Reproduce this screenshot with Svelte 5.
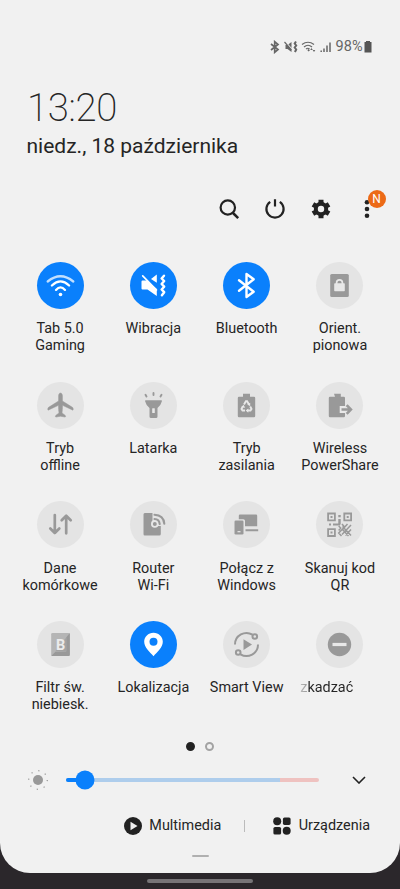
<script lang="ts">
   let tiles = $state([
      { icon: "wifi", label: ["Tab 5.0", "Gaming"], active: true },
      { icon: "vibrate", label: ["Wibracja"], active: true },
      { icon: "bluetooth", label: ["Bluetooth"], active: true },
      { icon: "rotation", label: ["Orient.", "pionowa"], active: false },
      { icon: "plane", label: ["Tryb", "offline"], active: false },
      { icon: "torch", label: ["Latarka"], active: false },
      { icon: "battery", label: ["Tryb", "zasilania"], active: false },
      { icon: "share", label: ["Wireless", "PowerShare"], active: false },
      { icon: "data", label: ["Dane", "komórkowe"], active: false },
      { icon: "router", label: ["Router", "Wi-Fi"], active: false },
      { icon: "windows", label: ["Połącz z", "Windows"], active: false },
      { icon: "qr", label: ["Skanuj kod", "QR"], active: false },
      { icon: "filter", label: ["Filtr św.", "niebiesk."], active: false },
      { icon: "location", label: ["Lokalizacja"], active: true },
      { icon: "cast", label: ["Smart View"], active: false },
      { icon: "dnd", label: ["zkadzać"], active: false },
   ]);

   let brightness = $state(7.5);
</script>

<div class="screen">
   <div class="panel">
      <div class="status">
         <svg width="61" height="14" viewBox="0 0 61 14" fill="none" stroke="#666">
            <path d="M1 4l7 5.500L4.700 12.300V1.700L8 4.500 1 10" stroke-width="1.700" />
            <path d="M15.500 5h2l4-3v10l-4-3h-2z" fill="#666" stroke="none" />
            <path d="M15 1.500l8 9" stroke="#f1f1f1" stroke-width="1.200" />
            <path d="M14.500 2l7 8" stroke-width="1.200" />
            <path d="M26 1.500l-1.300 2 1.500 2-1.500 2 1.500 2-1.300 2.500" stroke-width="2" />
            <path d="M32 4.500q6-4.500 12 0M34 7q4-3.500 8 0M36 9q2-1.500 3.500 0" stroke-width="1.200" />
            <path d="M38 9.500l1.200 1.500" stroke-width="1.800" />
            <path d="M41.500 8l1.300 2h-2.600zM44 12l-1.300-2h2.600z" fill="#666" stroke="none" />
            <path d="M51.200 12v-1.500M54 12V8.500M57 12V5.500M60 12V2.500" stroke-width="1.500" />
         </svg>
         <span>98%</span>
         <svg width="8" height="13" viewBox="0 0 8 13"><path d="M2 1h4v1h1.500v10.500H.5V2H2z" fill="#555" /></svg>
      </div>

      <div class="time">13:20</div>
      <div class="date">niedz., 18 października</div>

      <div class="toolbar">
         <svg viewBox="-12 -12 24 24" fill="none" stroke="#222" stroke-width="2.200">
            <circle cx="-1.200" cy="-1.500" r="7.200" />
            <path d="M4 4l5.200 5.200" stroke-width="2.500" />
         </svg>
         <svg viewBox="-12 -12 24 24" fill="none" stroke="#222" stroke-width="2.200">
            <path d="M-4.800-7.200A8.600 8.600 0 1 0 4.800-7.200M0-9.800V-2.500" />
         </svg>
         <svg viewBox="-12 -12 24 24" fill="none" stroke="#222">
            <circle r="5.200" stroke-width="4" />
            <path d="M-2.500-7.500h5M-2.500 7.500h5" stroke-width="3.600" />
            <path d="M-2.500-7.500h5M-2.500 7.500h5" stroke-width="3.600" transform="rotate(60)" />
            <path d="M-2.500-7.500h5M-2.500 7.500h5" stroke-width="3.600" transform="rotate(120)" />
         </svg>
         <div class="more">
            <svg viewBox="-12 -12 24 24" fill="#222">
               <circle cy="-6.700" r="2.300" />
               <circle r="2.300" />
               <circle cy="6.700" r="2.300" />
            </svg>
            <span class="badge">N</span>
         </div>
      </div>

      <div class="tiles">
         {#each tiles as tile}
            <div class={"tile " + (tile.active ? "active" : "")}>
               <button class="circle" aria-label={tile.label.join(" ")} onclick={() => tile.active = !tile.active}>
                  <svg viewBox="-23.500 -23.500 47 47">
                     {#if tile.icon === "wifi"}
                        <g class="line" stroke-width="2.300">
                           <path d="M-12.800-4Q0-14.500 12.800-4" opacity=".75" />
                           <path d="M-8.600 0Q0-8.200 8.600 0" />
                           <path d="M-4.500 4.400Q0-.6 4.500 4.400" />
                        </g>
                        <circle cy="9" r="1.800" />
                     {:else if tile.icon === "vibrate"}
                        <path d="M-11-5h4.500L3.300 3.500v7L-6 4h-5q-1 0-1-1v-7q0-1 1-1z" />
                        <path d="M-2.500-6.500L3.300-11v8.200z" />
                        <path class="line" d="M-10.800-9.700L3 4.500" stroke-width="1.700" />
                        <path class="line" d="M10.500-9.800L8.100-7l2.600 2.500-2.600 3 2.600 2.700L8.100 4l2.600 2.700-2.300 3" stroke-width="2.400" />
                     {:else if tile.icon === "bluetooth"}
                        <path class="line" d="M-7.500-5.300L7.200 6.200 0 11.500V-11.500L7.200-6.200-7.500 5.300" stroke-width="2.400" />
                     {:else if tile.icon === "rotation"}
                        <rect x="-9.300" y="-11.500" width="18.600" height="23" rx="1.500" />
                        <rect class="cut" x="-5.300" y="-2.200" width="10.600" height="8" rx=".8" />
                        <path class="cut-line" d="M-2.900-1.500v-1.300a2.900 2.900 0 0 1 5.800 0v1.300" stroke-width="1.700" />
                     {:else if tile.icon === "plane"}
                        <path d="M0-12.500c1.100 0 1.900 1.200 1.900 2.800v5.200l10 6.300c.8.500 1.100 2.300.5 2.900L2-.2c0 3-.2 5.700-.5 7.700l3 2.200c.7.600.7 1.900.1 1.900L0 10.700l-4.600.9c-.6 0-.6-1.300.1-1.900l3-2.200c-.3-2-.5-4.700-.5-7.700l-10.400 4.900c-.6-.6-.3-2.400.5-2.900l10-6.300v-5.200c0-1.600.8-2.800 1.900-2.800z" stroke="#999" stroke-width=".5" />
                     {:else if tile.icon === "torch"}
                        <path d="M-7.700-5.200h15.400q1 0 .7 1-1 4.200-4.400 6.700V11q0 1.500-1.500 1.500h-5Q-4 12.500-4 11V2.500q-3.400-2.500-4.400-6.700-.3-1 .7-1z" />
                        <rect class="cut" x="-1.300" y="2.700" width="2.600" height="4.700" rx=".5" />
                        <path class="line" d="M0-12.500v2M-8-10.700l1 1.700M8-10.700L7-9" stroke-width="1.900" />
                     {:else if tile.icon === "battery"}
                        <path d="M-3.500-11.700h7v3h4q1.200 0 1.200 1.200v18q0 1.200-1.200 1.200h-15q-1.200 0-1.200-1.200v-18q0-1.200 1.200-1.200h4z" />
                        <g class="cut-line" stroke-width="1.900">
                           <path d="M-2.500-1L-.6-4.200h1.200L2.500-1M3.700 1L5 3.500 4 5H1M-1.500 5H-4L-5 3.500-3.500.8" />
                        </g>
                        <path class="cut" d="M3.700-2.700v3.400L.8-1zM1.800 3v4.200L-.8 5.100zM-5.300 1.800L-3-.7l1.700 3z" />
                     {:else if tile.icon === "share"}
                        <path d="M-5.500-11.700h6.800v3h3q1.200 0 1.200 1.200v18q0 1.200-1.200 1.200h-13.800q-1.200 0-1.200-1.200v-18q0-1.200 1.200-1.200h5z" />
                        <path class="cut" d="M.2.500h5.500v7H.2z" />
                        <path class="line flat" d="M2 4h9M7.200-.3l4.200 4.300-4.200 4.300" stroke-width="2.600" />
                     {:else if tile.icon === "data"}
                        <path class="line" d="M-5.700-9.500V8.500M-10.200 4l4.500 4.500L-1.200 4M5.700 8.800V-8.700M1.200-4.200l4.500-4.500 4.500 4.500" stroke-width="2.700" />
                     {:else if tile.icon === "router"}
                        <path d="M-8.700-11.500H-1V1.500h8.300v8q0 1.500-1.500 1.500H-8.700q-1.300 0-1.300-1.500V-10q0-1.500 1.300-1.500z" />
                        <circle class="cut" cx="1.300" cy="-.6" r="3.800" />
                        <circle cx="1.300" cy="-.6" r="2" />
                        <path class="line" d="M1-5.500q4.700.2 5.200 5M1-9.800q9.200.4 9.800 9" stroke-width="2.100" />
                     {:else if tile.icon === "windows"}
                        <path d="M-6.500-10h16q1.200 0 1.200 1.200V1.700H-1.500v-5.400q0-1.600-1.600-1.600h-4.600v-3.500q0-1.200 1.200-1.200zM-1 4.700h12.700v2H-1z" />
                        <rect x="-12" y="-4" width="9" height="14" rx="1.300" />
                        <path class="cut" d="M-9 6.600h3v1.200h-3z" />
                     {:else if tile.icon === "qr"}
                        <path class="line flat" d="M-11.400-11h6.800v6.800h-6.800zM4.800-11h6.800v6.800H4.800zM-11.400 4.700h6.800v6.800h-6.800z" stroke-width="1.800" />
                        <path d="M-9-8.600h2v2h-2zM7.200-8.600h2v2h-2zM-9 7.100h2v2h-2zM-1.200-9.500h2.400v2.300h-2.400zM-1.200-5.500h2.400V0h-2.400zM-10.500-1h2v2h-2zM-6.500-1h7v2h-7z" />
                        <path class="line flat" d="M-.8 1.500l2 2L-.8 6M2.500-.5l2.500 3L-.8 8.500 2 11.500M8-.5L3 5l6 6.500M11.500.5L2.500 10M11.500 5L6 11M3 2l8.500 9" stroke-width="1.500" />
                     {:else if tile.icon === "filter"}
                        <rect x="-9.300" y="-11.500" width="18.600" height="23" rx="1.300" fill="#b5b5b5" />
                        <path d="M9.300-11.500L5.700-7v14l-11 .5-4 4H8q1.300 0 1.300-1.300z" />
                        <path d="M5.700-7v14h-11z" fill="#a3a3a3" />
                        <text x="0" y="5.200">B</text>
                     {:else if tile.icon === "location"}
                        <path d="M0-11.800c5.200 0 9.300 4 9.300 9.100C9.300 3 3.700 7.500 0 11.700-3.700 7.500-9.300 3-9.300-2.700c0-5.100 4.100-9.100 9.300-9.100z" />
                        <circle class="cut" cy="-2.700" r="4" />
                     {:else if tile.icon === "cast"}
                        <g class="line flat" stroke-width="2">
                           <path d="M-11.500 0A11.500 11.500 0 0 1 6-9.800M11.500 0A11.500 11.500 0 0 1-6 9.800" />
                           <circle cx="8.300" cy="-8" r="2.300" />
                           <circle cx="-8.300" cy="8" r="2.300" />
                        </g>
                        <path d="M-3-5.200L5.500 0-3 5.500z" />
                     {:else}
                        <circle r="11.700" />
                        <path class="cut" d="M-7-1.600H7v3.200H-7z" />
                     {/if}
                  </svg>
               </button>
               <div class={"label " + (tile.icon === "dnd" ? "scrolling" : "")}>
                  {#each tile.label as line}
                     <span>{line}</span>
                  {/each}
               </div>
            </div>
         {/each}
      </div>

      <div class="pages">
         <span class="page current"></span>
         <span class="page"></span>
      </div>

      <div class="brightness">
         <svg class="sun" viewBox="-11 -11 22 22" fill="#999">
            <circle r="5" />
            <circle r="9.300" fill="none" stroke="#999" stroke-width="1.300" stroke-dasharray="1.200 6.104" />
         </svg>
         <div class="track">
            <div class="filled" style="width: {brightness}%"></div>
            <div class="knob" style="left: {brightness}%"></div>
         </div>
         <svg class="chevron" viewBox="0 0 14 8" fill="none" stroke="#222" stroke-width="1.600"><path d="M1 1l6 6 6-6" /></svg>
      </div>

      <div class="links">
         <svg viewBox="0 0 18 18"><circle cx="9" cy="9" r="9" fill="#222" /><path d="M6.500 4.700L13.500 9l-7 4.300z" fill="#f1f1f1" /></svg>
         <span>Multimedia</span>
         <i class="divider"></i>
         <svg viewBox="0 0 18 18" fill="#222">
            <circle cx="4.200" cy="4.200" r="4" />
            <rect x="9.900" y=".4" width="7.700" height="7.500" rx="1.600" />
            <rect x=".4" y="10" width="7.700" height="7.500" rx="1.600" />
            <circle cx="13.700" cy="13.700" r="4" />
         </svg>
         <span>Urządzenia</span>
      </div>

      <div class="handle"></div>
   </div>
   <div class="nav"></div>
</div>

<style>
   :global(body) {
      background: #2b272b;
   }

   .screen {
      width: 400px;
      height: 889px;
      overflow: hidden;
      background: #2b272b;
      font-family: Roboto, "Liberation Sans", sans-serif;
      color: #252525;
   }

   .panel {
      display: flex;
      flex-direction: column;
      box-sizing: border-box;
      height: 872.5px;
      padding-top: 38px;
      background: #f1f1f1;
      border-radius: 0 0 30px 30px;
   }

   svg {
      display: block;
      flex: none;
   }

   .status {
      display: flex;
      align-items: center;
      justify-content: flex-end;
      height: 17px;
      padding-right: 28.5px;
      font-size: 14.5px;
      color: #666;
   }

   .status span {
      margin: 0 1px 0 4.5px;
   }

   .time {
      height: 44px;
      margin: 30.5px 0 0 27px;
      font-size: 38.3px;
      font-weight: 200;
      letter-spacing: -0.3px;
      line-height: 44px;
   }

   .date {
      height: 26px;
      margin: 3.5px 0 0 26.5px;
      font-size: 21px;
      line-height: 26px;
      white-space: nowrap;
   }

   .toolbar {
      display: flex;
      justify-content: flex-end;
      gap: 21.7px;
      margin-top: 37.5px;
      padding-right: 21.5px;
   }

   .toolbar svg {
      width: 24px;
      height: 24px;
   }

   .more {
      position: relative;
   }

   .badge {
      position: absolute;
      top: -7px;
      left: 13px;
      width: 18px;
      height: 18px;
      border-radius: 50%;
      background: #ec6a17;
      color: #fff;
      font-size: 12px;
      line-height: 18px;
      text-align: center;
   }

   .tiles {
      display: grid;
      grid-template-columns: repeat(4, 93.3px);
      grid-auto-rows: 119.6px;
      justify-content: center;
      margin-top: 41.7px;
   }

   .tile {
      display: flex;
      flex-direction: column;
      align-items: center;
   }

   .circle {
      width: 47px;
      height: 47px;
      padding: 0;
      border: 0;
      border-radius: 50%;
      background: #e4e4e4;
      cursor: pointer;
   }

   .circle svg {
      width: 47px;
      height: 47px;
      fill: #999;
   }

   .active .circle {
      background: #0a80fc;
   }

   .active .circle svg {
      fill: #fff;
   }

   .circle .line {
      fill: none;
      stroke: #999;
      stroke-linecap: round;
      stroke-linejoin: round;
   }

   .circle .flat {
      stroke-linecap: butt;
      stroke-linejoin: miter;
   }

   .active .circle .line {
      stroke: #fff;
   }

   .cut {
      fill: #e8e8e8;
   }

   .active .cut {
      fill: #0a80fc;
   }

   .cut-line {
      fill: none;
      stroke: #e8e8e8;
   }

   .circle text {
      fill: #ececec;
      font: bold 14.5px Roboto, sans-serif;
      text-anchor: middle;
   }

   .label {
      display: flex;
      flex-direction: column;
      align-items: center;
      margin-top: 11.3px;
      font-size: 14.4px;
      line-height: 17px;
      white-space: nowrap;
   }

   .scrolling {
      align-self: flex-start;
      margin-left: 7px;
   }

   .scrolling span {
      background: linear-gradient(90deg, #bbb, #999 7px, #252525 8px);
      background-clip: text;
      color: transparent;
   }

   .pages {
      display: flex;
      justify-content: center;
      gap: 10px;
      margin-top: 1px;
   }

   .page {
      box-sizing: border-box;
      width: 9px;
      height: 9px;
      border: 2px solid #a3a3a3;
      border-radius: 50%;
   }

   .current {
      border-color: #222;
      background: #222;
   }

   .brightness {
      display: flex;
      align-items: center;
      height: 22px;
      margin-top: 18.3px;
      padding-left: 27px;
   }

   .sun {
      width: 22px;
      height: 22px;
   }

   .track {
      position: relative;
      width: 253.5px;
      height: 3.5px;
      margin-left: 16.5px;
      border-radius: 2px;
      background: linear-gradient(90deg, #aecdec 84.5%, #efc2c0 84.5%);
   }

   .filled {
      height: 100%;
      border-radius: 2px;
      background: #0a80fc;
   }

   .knob {
      position: absolute;
      top: 50%;
      width: 19px;
      height: 19px;
      border-radius: 50%;
      background: #0a80fc;
      transform: translate(-50%, -50%);
   }

   .chevron {
      width: 14px;
      height: 8px;
      margin-left: 33px;
   }

   .links {
      display: flex;
      align-items: center;
      justify-content: flex-end;
      height: 24px;
      margin-top: 22.7px;
      padding-right: 30px;
      font-size: 14.4px;
   }

   .links svg {
      width: 18px;
      height: 18px;
      margin-right: 7.5px;
   }

   .divider {
      width: 1px;
      height: 12px;
      margin: 0 28px 0 23px;
      background: #bbb;
   }

   .handle {
      width: 17px;
      height: 2px;
      margin: 17.3px auto 0;
      border-radius: 1px;
      background: #b0b0b0;
   }

   .nav {
      width: 106px;
      height: 4.5px;
      margin: 6px auto 0;
      border-radius: 3px;
      background: #777477;
   }
</style>
